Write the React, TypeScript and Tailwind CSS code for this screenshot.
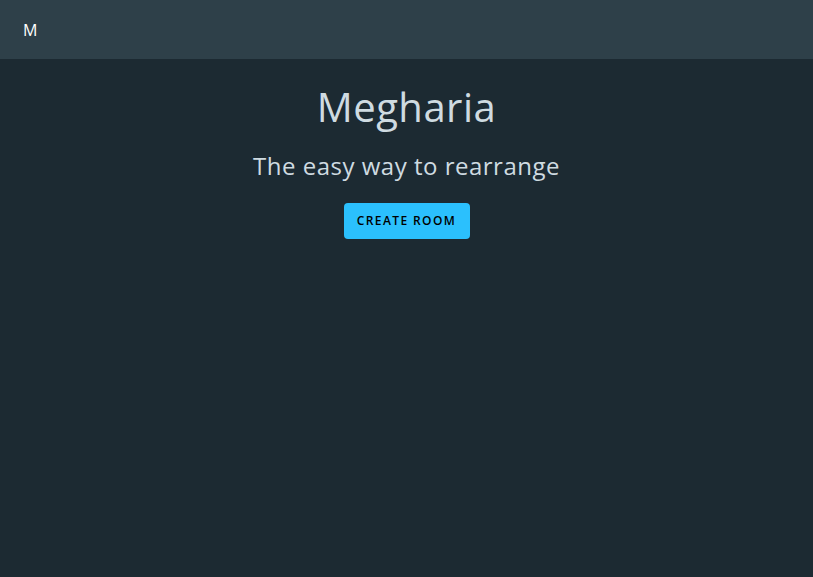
import { FC } from "react";

const App: FC = () => {
  return (
    <div className="min-h-screen bg-[#1c2a32] font-['Open_Sans',sans-serif] text-[#cfdbe1]">
      <header className="h-[59px] bg-[#2e4049] flex items-center px-[23px]">
        <span className="text-[16px] text-white font-medium">M</span>
      </header>
      <main className="flex flex-col items-center">
        <h1 className="mt-[22px] text-[40px] leading-[52px] tracking-[0.5px]">Megharia</h1>
        <h2 className="mt-[18px] text-[24px] leading-[30px] tracking-[0.5px]">The easy way to rearrange</h2>
        <button className="mt-[22px] h-[36px] w-[126px] rounded-[4px] bg-[#2bc0fd] text-black text-[12px] font-semibold tracking-[1.4px]">
          CREATE ROOM
        </button>
      </main>
    </div>
  );
};

export default App;
